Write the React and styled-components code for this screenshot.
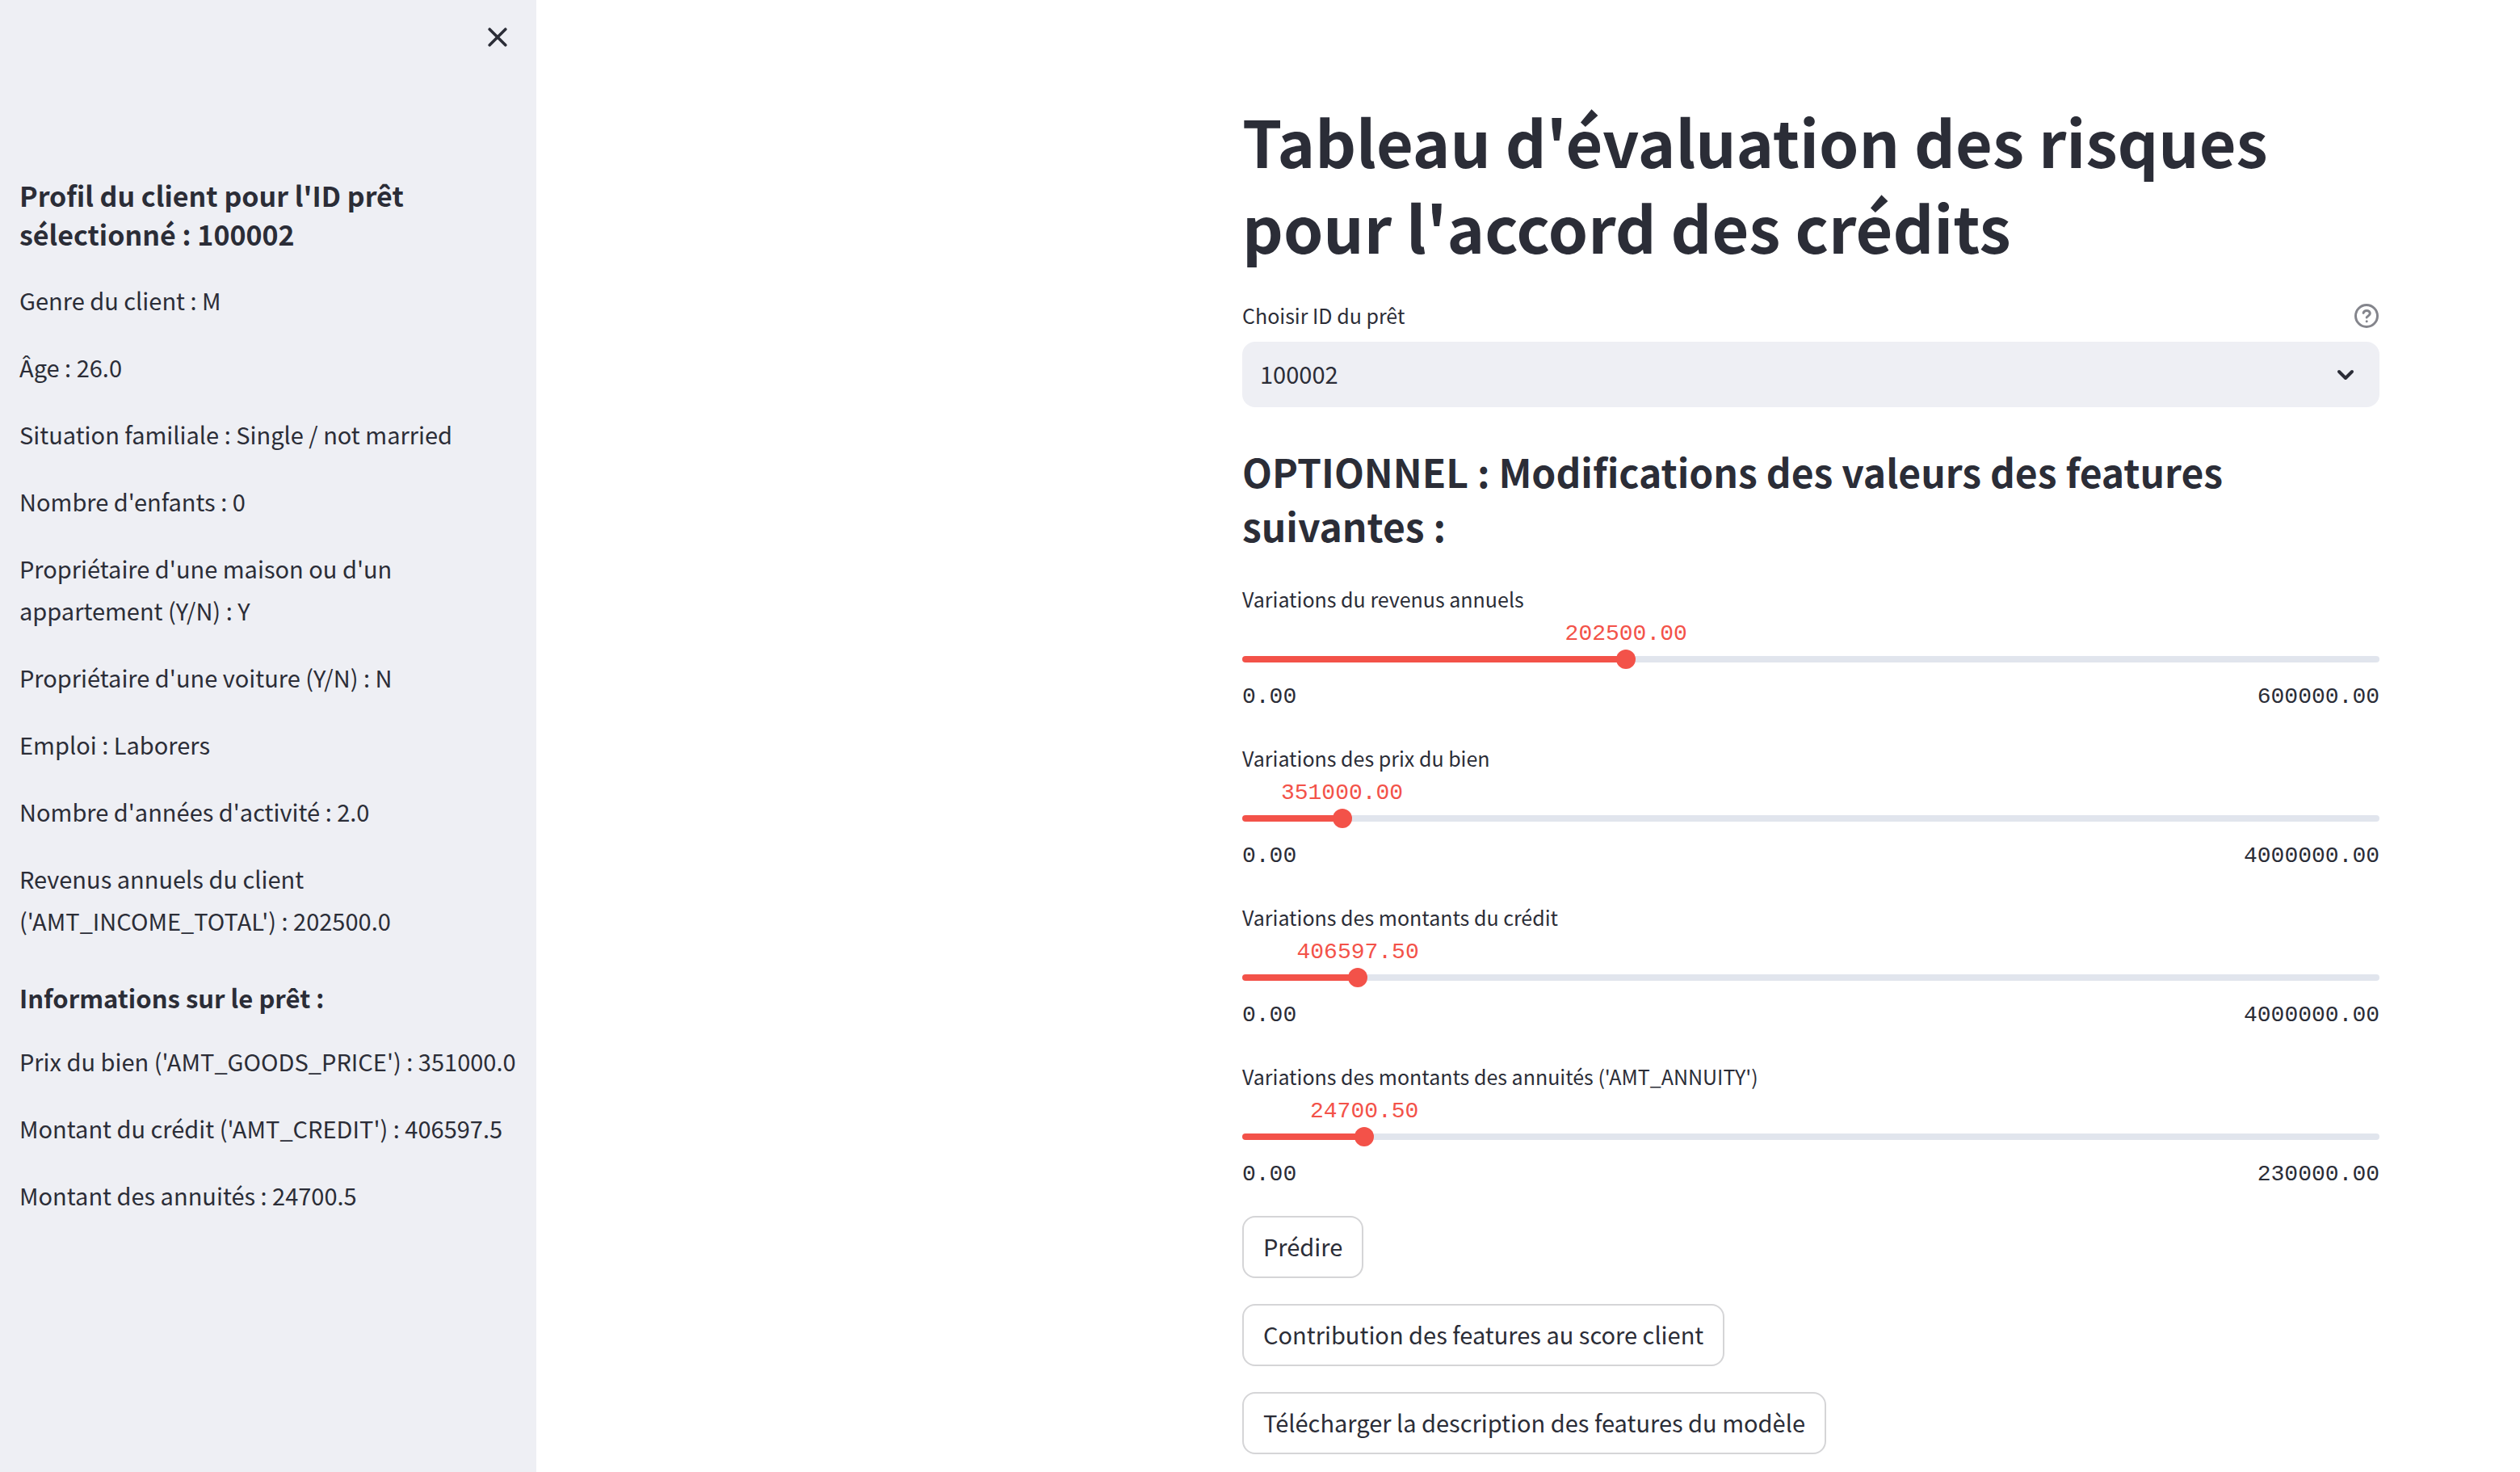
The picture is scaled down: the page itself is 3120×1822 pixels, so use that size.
import React, { useState } from "react";
import styled, { createGlobalStyle } from "styled-components";

const color = {
  text: "#2b2d37",
  muted: "#84858c",
  panel: "#eeeff4",
  track: "#e1e5ed",
  accent: "#f35249",
  border: "#d5d5d7",
};

const sans = `"Noto Sans CJK JP", "Noto Sans", sans-serif`;
const mono = `"Liberation Mono", monospace`;

const GlobalStyle = createGlobalStyle`
  *, *::before, *::after { box-sizing: border-box; }
  body {
    margin: 0;
    background: #fff;
    color: ${color.text};
    font-family: ${sans};
    font-size: 29px;
  }
  h1, h2, h3, p { margin: 0; }
`;

const Page = styled.div`
  display: flex;
  align-items: stretch;
  min-height: 100vh;
`;

const Sidebar = styled.aside`
  flex: 0 0 664px;
  padding: 22px 24px 32px;
  background: ${color.panel};
`;

const SidebarHeader = styled.header`
  display: flex;
  justify-content: flex-end;
  height: 196px;
`;

const CloseButton = styled.button`
  display: flex;
  align-items: center;
  justify-content: center;
  width: 48px;
  height: 48px;
  padding: 0;
  border: 0;
  background: transparent;
  color: inherit;
  cursor: pointer;
`;

const Profile = styled.div`
  display: flex;
  flex-direction: column;
  gap: 31px;
`;

const ProfileTitle = styled.h2`
  font-size: 34px;
  line-height: 48px;
  font-weight: 700;
`;

const LoanTitle = styled.h3`
  padding-top: 17px;
  font-size: 31px;
  line-height: 43px;
  font-weight: 700;
`;

const Fact = styled.p`
  line-height: 52px;
`;

const Main = styled.main`
  flex: 1;
  min-width: 0;
  display: flex;
  justify-content: flex-end;
  padding: 121px 174px 22px 32px;
`;

const Content = styled.div`
  flex: 0 1 1408px;
  min-width: 0;
  display: flex;
  flex-direction: column;
  gap: 32px;
`;

const Title = styled.h1`
  padding-bottom: 5px;
  font-size: 79px;
  line-height: 106px;
  font-weight: 700;
`;

const SectionTitle = styled.h2`
  padding: 14px 0 5px;
  font-size: 48px;
  line-height: 67px;
  font-weight: 700;
`;

const LabelRow = styled.div`
  display: flex;
  align-items: center;
  justify-content: space-between;
  margin-bottom: 13px;
`;

const Label = styled.label`
  display: block;
  font-size: 25px;
  line-height: 40px;
`;

const HelpButton = styled.button`
  display: flex;
  padding: 0;
  border: 0;
  background: transparent;
  color: ${color.muted};
  cursor: help;
`;

const SelectBox = styled.div`
  position: relative;
`;

const Select = styled.select`
  display: block;
  width: 100%;
  height: 81px;
  padding: 0 80px 4px 22px;
  border: 0;
  border-radius: 16px;
  appearance: none;
  background: ${color.panel};
  color: inherit;
  font: inherit;
`;

const Chevron = styled.svg`
  position: absolute;
  top: 25px;
  right: 26px;
  pointer-events: none;
`;

const Sliders = styled.section`
  display: flex;
  flex-direction: column;
  gap: 38px;
  padding-bottom: 2px;
`;

const Value = styled.output`
  display: flex;
  justify-content: center;
  width: 0;
  margin-left: var(--position);
  padding: 6px 0 2px;
  color: ${color.accent};
  font-family: ${mono};
  font-size: 28px;
  line-height: 35px;
`;

const Track = styled.div`
  display: flex;
  align-items: center;
  height: 8px;
  margin: 8px 0;
  border-radius: 4px;
  background: linear-gradient(
    to right,
    ${color.accent} var(--position),
    ${color.track} var(--position)
  );
`;

const Range = styled.input`
  flex: 0 0 calc(100% + 24px);
  height: 24px;
  margin: 0 -12px;
  appearance: none;
  background: transparent;
  cursor: pointer;

  &::-webkit-slider-thumb {
    appearance: none;
    width: 24px;
    height: 24px;
    border-radius: 50%;
    background: ${color.accent};
  }
`;

const Bounds = styled.div`
  display: flex;
  justify-content: space-between;
  margin-top: 25px;
  font-family: ${mono};
  font-size: 28px;
  line-height: 35px;
`;

const Actions = styled.div`
  display: flex;
  flex-direction: column;
  align-items: flex-start;
  gap: 32px;
`;

const Button = styled.button`
  height: 77px;
  padding: 0 24px 4px;
  border: 2px solid ${color.border};
  border-radius: 16px;
  background: #fff;
  color: inherit;
  font: inherit;
  cursor: pointer;
`;

const profileFacts = [
  "Genre du client : M",
  "Âge : 26.0",
  "Situation familiale : Single / not married",
  "Nombre d'enfants : 0",
  "Propriétaire d'une maison ou d'un appartement (Y/N) : Y",
  "Propriétaire d'une voiture (Y/N) : N",
  "Emploi : Laborers",
  "Nombre d'années d'activité : 2.0",
  "Revenus annuels du client ('AMT_INCOME_TOTAL') : 202500.0",
];

const loanFacts = [
  "Prix du bien ('AMT_GOODS_PRICE') : 351000.0",
  "Montant du crédit ('AMT_CREDIT') : 406597.5",
  "Montant des annuités : 24700.5",
];

const features = [
  { id: "income", label: "Variations du revenus annuels", initial: 202500, max: 600000 },
  { id: "goods", label: "Variations des prix du bien", initial: 351000, max: 4000000 },
  { id: "credit", label: "Variations des montants du crédit", initial: 406597.5, max: 4000000 },
  {
    id: "annuity",
    label: "Variations des montants des annuités ('AMT_ANNUITY')",
    initial: 24700.5,
    max: 230000,
  },
];

function FeatureSlider({ id, label, initial, max }) {
  const [value, setValue] = useState(initial);
  return (
    <div style={{ "--position": `${(value / max) * 100}%` }}>
      <Label htmlFor={id}>{label}</Label>
      <Value htmlFor={id}>{value.toFixed(2)}</Value>
      <Track>
        <Range
          id={id}
          type="range"
          min="0"
          max={max}
          step="any"
          value={value}
          onChange={(e) => setValue(Number(e.target.value))}
        />
      </Track>
      <Bounds>
        <span>0.00</span>
        <span>{max.toFixed(2)}</span>
      </Bounds>
    </div>
  );
}

export default function App() {
  return (
    <>
      <GlobalStyle />
      <Page>
        <Sidebar>
          <SidebarHeader>
            <CloseButton type="button" aria-label="Fermer">
              <svg width="24" height="24" viewBox="0 0 24 24" fill="none" stroke="currentColor" strokeWidth="3.6" strokeLinecap="round">
                <path d="M2.2 2.2L21.8 21.8M21.8 2.2L2.2 21.8" />
              </svg>
            </CloseButton>
          </SidebarHeader>
          <Profile>
            <ProfileTitle>Profil du client pour l'ID prêt sélectionné : 100002</ProfileTitle>
            {profileFacts.map((fact) => (
              <Fact key={fact}>{fact}</Fact>
            ))}
            <LoanTitle>Informations sur le prêt :</LoanTitle>
            {loanFacts.map((fact) => (
              <Fact key={fact}>{fact}</Fact>
            ))}
          </Profile>
        </Sidebar>
        <Main>
          <Content>
            <Title>Tableau d'évaluation des risques pour l'accord des crédits</Title>
            <div>
              <LabelRow>
                <Label htmlFor="loan">Choisir ID du prêt</Label>
                <HelpButton type="button" aria-label="Aide">
                  <svg width="32" height="32" viewBox="0 0 32 32" fill="none" stroke="currentColor" strokeWidth="3" strokeLinecap="round" strokeLinejoin="round">
                    <circle cx="16" cy="17" r="13.5" />
                    <path d="M12.1 13.4C12.6 11.6 14.2 10.5 16.1 10.5C18.5 10.5 20.3 12 20.3 14.1C20.3 16.9 16.4 17.2 16.2 18.9" />
                    <path d="M16.2 23.7V23.8" />
                  </svg>
                </HelpButton>
              </LabelRow>
              <SelectBox>
                <Select id="loan" defaultValue="100002">
                  <option value="100002">100002</option>
                </Select>
                <Chevron width="32" height="32" viewBox="0 0 32 32" fill="none" stroke="currentColor" strokeWidth="4" strokeLinecap="round" strokeLinejoin="round">
                  <path d="M8 12L16 20L24 12" />
                </Chevron>
              </SelectBox>
            </div>
            <SectionTitle>OPTIONNEL : Modifications des valeurs des features suivantes :</SectionTitle>
            <Sliders>
              {features.map((feature) => (
                <FeatureSlider key={feature.id} {...feature} />
              ))}
            </Sliders>
            <Actions>
              <Button type="button">Prédire</Button>
              <Button type="button">Contribution des features au score client</Button>
              <Button type="button">Télécharger la description des features du modèle</Button>
            </Actions>
          </Content>
        </Main>
      </Page>
    </>
  );
}
